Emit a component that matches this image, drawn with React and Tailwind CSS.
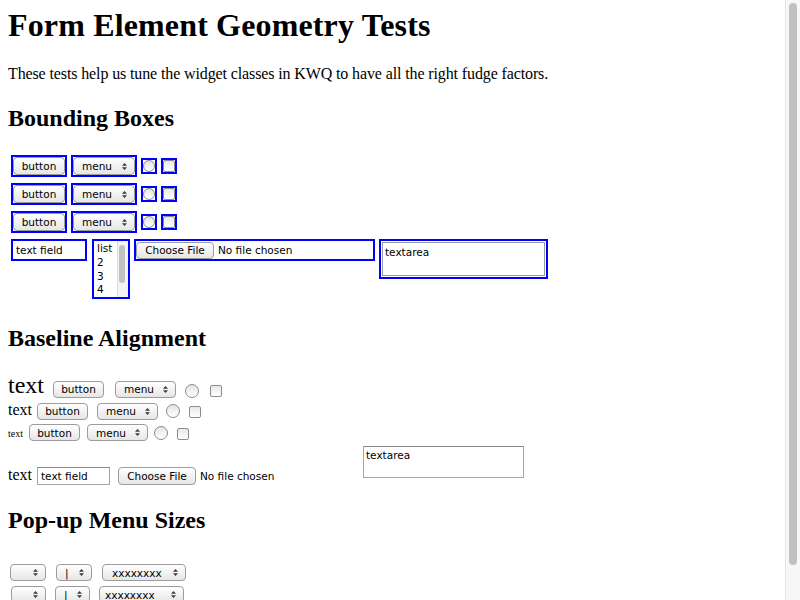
// Form element geometry test page — bounding boxes, baseline alignment, pop-up sizes.

const UI = "font-['DejaVu_Sans','Liberation_Sans',sans-serif] text-[10.5px] text-black"
const AQUA = 'rounded-[4px] border border-[#9c9c9c] bg-linear-to-b from-white to-[#e6e6e6]'
const BLUE = 'border-2 border-[#0000ff]'

function UpDown() {
  return (
    <svg width="5" height="7" viewBox="0 0 5 7" className="shrink-0">
      <path d="M2.5 0L5 2.8H0Z M0 4.2H5L2.5 7Z" fill="#3c3c3c" />
    </svg>
  )
}

function Btn({ className = '', children }) {
  return (
    <span className={`inline-flex items-center justify-center leading-[12px] ${AQUA} ${UI} ${className}`}>
      {children}
    </span>
  )
}

function Menu({ className = '', label, pad = 'pl-[8px]' }) {
  return (
    <span
      className={`inline-flex items-center pr-[7px] leading-[12px] ${pad} ${label ? 'justify-between' : 'justify-end'} ${AQUA} ${UI} ${className}`}
    >
      {label && <span className="whitespace-nowrap">{label}</span>}
      <UpDown />
    </span>
  )
}

function Radio({ className = '' }) {
  return <span className={`rounded-full border border-[#8c8c8c] bg-linear-to-b from-[#e4e4e4] to-white ${className}`} />
}

function Check({ className = '' }) {
  return <span className={`rounded-[2px] border border-[#8c8c8c] bg-linear-to-b from-[#e9e9e9] to-white ${className}`} />
}

function BoxRow() {
  return (
    <div className="flex h-[22px] items-center gap-[4px]">
      <div className={`flex h-[22px] w-[56px] ${BLUE}`}>
        <Btn className="h-full w-full">button</Btn>
      </div>
      <div className={`flex h-[22px] w-[66px] ${BLUE}`}>
        <Menu className="h-full w-full" label="menu" />
      </div>
      <div className={`flex h-[16px] w-[16px] ${BLUE}`}>
        <Radio className="block h-full w-full" />
      </div>
      <div className={`flex h-[16px] w-[16px] ${BLUE}`}>
        <Check className="block h-full w-full" />
      </div>
    </div>
  )
}

function BoundingBoxes() {
  return (
    <div className="mt-[23px] flex flex-col gap-[6px] pl-[3px]">
      <BoxRow />
      <BoxRow />
      <BoxRow />
      <div className="flex items-start">
        <div className={`flex h-[22px] w-[76px] items-center bg-white pl-[3px] leading-[12px] ${BLUE} ${UI}`}>text field</div>
        <div className={`ml-[5px] flex h-[60px] w-[38px] overflow-hidden bg-white ${BLUE}`}>
          <div className={`flex-1 pl-[3px] pt-[1px] leading-[13.8px] ${UI}`}>
            <div>list</div>
            <div>2</div>
            <div>3</div>
            <div>4</div>
          </div>
          <div className="w-[11px] border-l border-[#dcdcdc] bg-[#f4f4f4] pl-[1px] pt-[4px]">
            <div className="h-[38px] w-[6px] rounded-full bg-[#c1c1c1]" />
          </div>
        </div>
        <div className={`ml-[4px] flex h-[22px] w-[241px] items-center ${BLUE}`}>
          <Btn className="h-[17px] w-[78px]">Choose File</Btn>
          <span className={`ml-[4px] leading-[12px] ${UI}`}>No file chosen</span>
        </div>
        <div className={`ml-[4px] h-[40px] w-[169px] bg-white p-[1px] ${BLUE}`}>
          <div className={`h-full border border-[#9a9a9a] pl-[2px] pt-[2px] leading-[14px] ${UI}`}>textarea</div>
        </div>
      </div>
    </div>
  )
}

function Baseline() {
  return (
    <div className="mt-[20px] whitespace-nowrap">
      <div className="h-[29px] text-[24px] leading-[26px]">
        <span>text</span>
        <Btn className="ml-[9px] h-[17px] w-[51px]">button</Btn>
        <Menu className="ml-[11px] h-[17px] w-[61px]" label="menu" />
        <Radio className="ml-[9px] inline-block h-[14px] w-[14px] align-[-5px]" />
        <Check className="ml-[11px] inline-block h-[12px] w-[12px] align-[-4px]" />
      </div>
      <div className="h-[23px] text-[16px] leading-[18px]">
        <span>text</span>
        <Btn className="ml-[5px] h-[17px] w-[51px]">button</Btn>
        <Menu className="ml-[9px] h-[17px] w-[61px]" label="menu" />
        <Radio className="ml-[8px] inline-block h-[14px] w-[14px] align-[-3px]" />
        <Check className="ml-[9px] inline-block h-[12px] w-[12px] align-[-3px]" />
      </div>
      <div className="h-[22px] text-[10px] leading-[10px]">
        <span>text</span>
        <Btn className="ml-[6px] h-[17px] w-[51px]">button</Btn>
        <Menu className="ml-[7px] h-[17px] w-[61px]" label="menu" />
        <Radio className="ml-[6px] inline-block h-[14px] w-[14px] align-[-3px]" />
        <Check className="ml-[9px] inline-block h-[12px] w-[12px] align-[-3px]" />
      </div>
      <div className="h-[40px] text-[16px] leading-[18px]">
        <span className="inline-block w-[355px]">
          <span>text</span>
          <span className={`ml-[5px] inline-flex h-[18px] w-[73px] items-center border border-[#a6a6a6] border-t-[#8a8a8a] bg-white pl-[3px] leading-[12px] ${UI}`}>
            text field
          </span>
          <Btn className="ml-[8px] h-[18px] w-[78px]">Choose File</Btn>
          <span className={`ml-[4px] leading-[12px] ${UI}`}>No file chosen</span>
        </span>
        <span className={`mb-[2px] inline-block h-[32px] w-[161px] overflow-hidden border border-[#a6a6a6] border-t-[#8a8a8a] bg-white pl-[2px] pt-[1px] align-baseline leading-[14px] ${UI}`}>
          textarea
        </span>
      </div>
    </div>
  )
}

function PopupSizes() {
  return (
    <div className="mt-[30px] flex flex-col gap-[5px] pl-[2px]">
      <div className="flex gap-[10px]">
        <Menu className="h-[17px] w-[36px]" />
        <Menu className="h-[17px] w-[36px]" label="|" />
        <Menu className="h-[17px] w-[84px]" label="xxxxxxxx" pad="pl-[9px]" />
      </div>
      <div className="flex gap-[9px] pl-[1px]">
        <Menu className="h-[17px] w-[35px]" />
        <Menu className="h-[17px] w-[35px]" label="|" />
        <Menu className="h-[17px] w-[85px]" label="xxxxxxxx" pad="pl-[5px]" />
      </div>
    </div>
  )
}

function Scrollbar() {
  return (
    <div className="h-full w-[15px] shrink-0 border-l border-[#e4e4e4] bg-[#f7f7f7] pl-[3px] pt-[3px]">
      <div className="h-[562px] w-[8px] rounded-full bg-[#c1c1c1]" />
    </div>
  )
}

export default function App() {
  return (
    <div className="flex h-[600px] w-[800px] overflow-hidden bg-white text-black">
      <div className="min-w-0 flex-1 pl-2 pt-[7px] font-['Liberation_Serif','Times_New_Roman',serif] text-[16px]">
        <h1 className="text-[32px] leading-[37px] font-bold tracking-[0.15px]">Form Element Geometry Tests</h1>
        <p className="mt-[21px] leading-[18px] tracking-[-0.12px]">
          These tests help us tune the widget classes in KWQ to have all the right fudge factors.
        </p>
        <h2 className="mt-[21px] text-[24px] leading-[28px] font-bold">Bounding Boxes</h2>
        <BoundingBoxes />
        <h2 className="mt-[25px] text-[24px] leading-[28px] font-bold">Baseline Alignment</h2>
        <Baseline />
        <h2 className="mt-[20px] text-[24px] leading-[28px] font-bold">Pop-up Menu Sizes</h2>
        <PopupSizes />
      </div>
      <Scrollbar />
    </div>
  )
}
